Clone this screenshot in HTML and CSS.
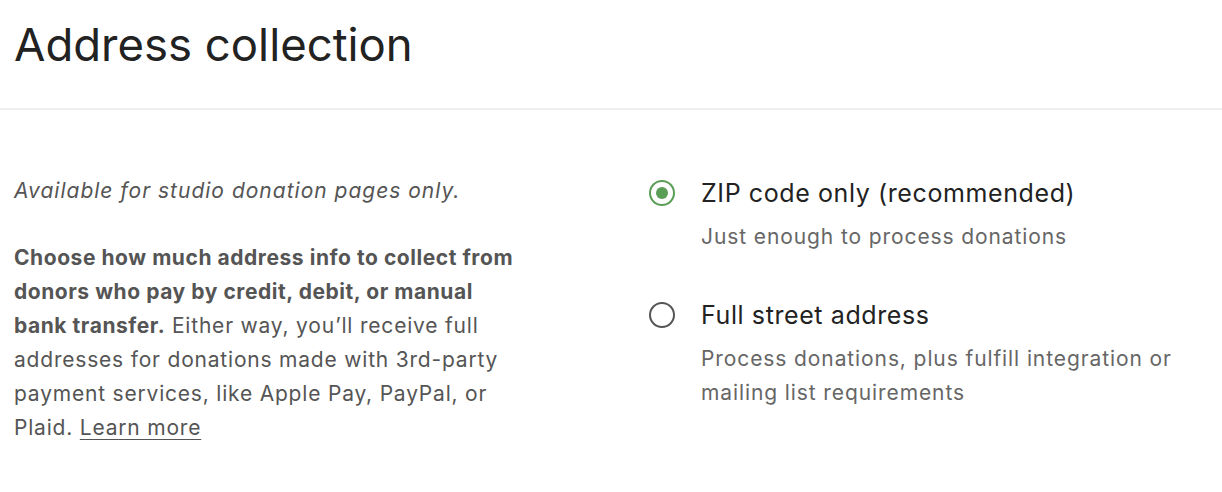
FILE: index.html
```html
<!DOCTYPE html>
<html>
<head>
    <meta charset="utf-8">
    <meta name="viewport" content="width=device-width, initial-scale=1">
    <title>Address collection</title>
    <link rel="stylesheet" href="styles.css">
</head>

<body>
    <div class="page-header">
        <h1 class="page-title">Address collection</h1>
    </div>

    <div class="settings">
        <div class="settings-info">
            <p class="note">Available for studio donation pages only.</p>
            <p class="desc"><b>Choose how much address info to collect from donors who pay by credit, debit, or manual bank transfer.</b> Either way, you’ll receive full addresses for donations made with 3rd-party payment services, like Apple Pay, PayPal, or Plaid. <a href="#">Learn more</a></p>
        </div>

        <div class="settings-options">
            <label class="option">
                <span class="radio checked"></span>
                <span class="option-text">
                    <span class="option-title">ZIP code only (recommended)</span>
                    <span class="option-sub">Just enough to process donations</span>
                </span>
            </label>
            <label class="option">
                <span class="radio"></span>
                <span class="option-text">
                    <span class="option-title">Full street address</span>
                    <span class="option-sub">Process donations, plus fulfill integration or mailing list requirements</span>
                </span>
            </label>
        </div>
    </div>
</body>
</html>
```

FILE: styles.css
```css
body, html {
    margin: 0;
    padding: 0;
    background: #fff;
    font-family: "Inter", "Noto Sans", sans-serif;}

.page-header {
    padding: 14px 14px 0 14px;
    height: 94px;
    border-bottom: 2px solid #eeeeee;}

.page-title {
    margin: 0;
    font-size: 45.5px;
    font-weight: 400;
    line-height: 62px;
    color: #222;}

.settings {
    display: flex;
    padding: 64px 14px 0 14px;}

.settings-info {
    width: 510px;
    color: #555;
    font-size: 21px;
    letter-spacing: 0.8px;
    line-height: 34px;}

.note {
    margin: 0 0 33px 0;
    font-style: italic;
    letter-spacing: 1px;}

.desc {
    margin: 0;}

.desc b {
    font-weight: 700;
    letter-spacing: 0.55px;}

.desc a {
    color: #555;
    text-decoration: underline;
    text-decoration-thickness: 1px;
    text-underline-offset: 4px;}

.settings-options {
    margin-left: 125px;
    padding-top: 2px;
    display: flex;
    flex-direction: column;
    gap: 44px;}

.option {
    display: flex;
    gap: 26px;}

.radio {
    flex: none;
    width: 22px;
    height: 22px;
    margin-top: 4px;
    border: 2px solid #555;
    border-radius: 50%;
    display: flex;
    align-items: center;
    justify-content: center;}

.radio.checked {
    border-color: #5a9e55;}

.radio.checked::after {
    content: "";
    width: 12px;
    height: 12px;
    border-radius: 50%;
    background: #5a9e55;}

.option-text {
    display: flex;
    flex-direction: column;
    width: 480px;}

.option-title {
    font-size: 25px;
    letter-spacing: 0.6px;
    line-height: 34px;
    color: #222;}

.option-sub {
    margin-top: 10px;
    font-size: 21px;
    letter-spacing: 0.9px;
    line-height: 34px;
    color: #666;}
```
